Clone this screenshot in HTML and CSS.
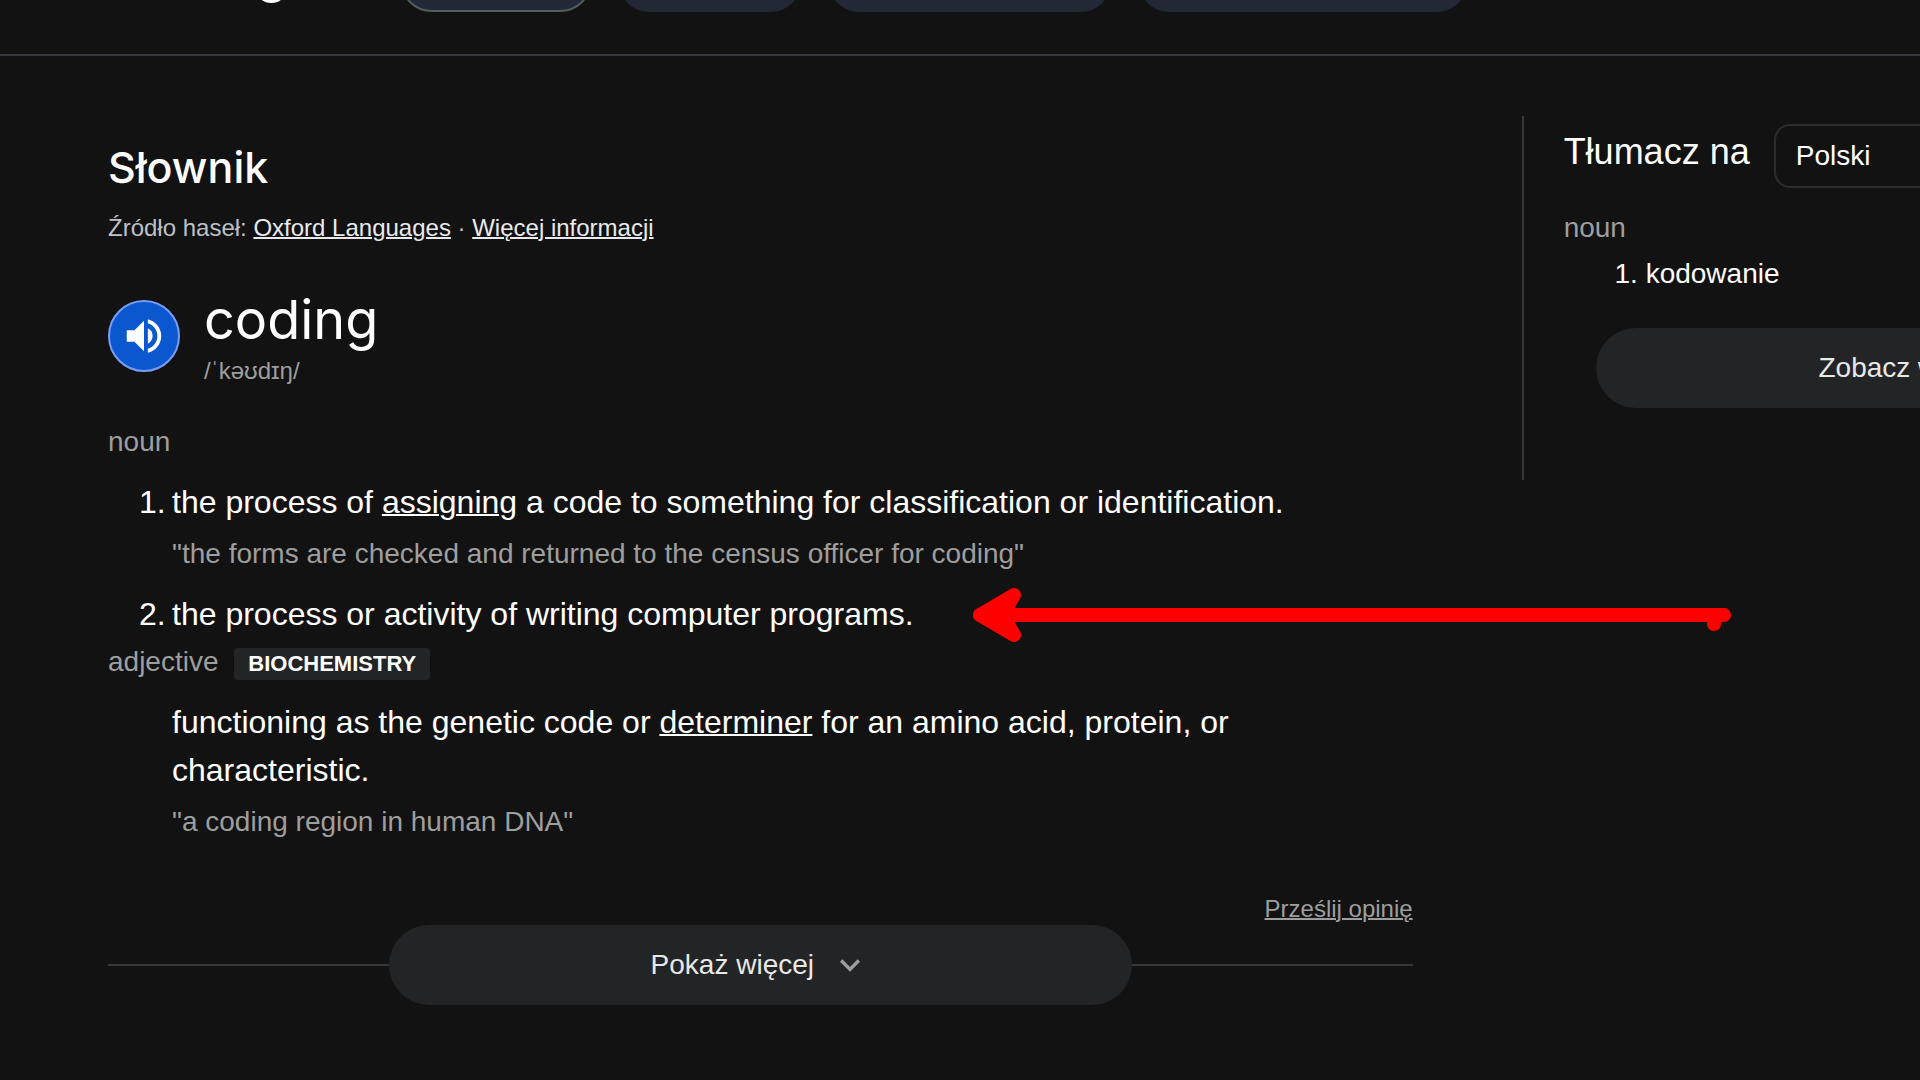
FILE: index.html
```html
<!DOCTYPE html>
<html lang="pl">

<head>
    <meta charset="UTF-8">
    <meta name="viewport" content="width=device-width, initial-scale=1.0">
    <title>coding</title>
    <link rel="stylesheet" href="styles.css">
</head>

<body>
    <header class="topbar">
        <div class="topbar-title">coding</div>
        <nav class="chips">
            <button class="chip chip-s active"></button>
            <button class="chip chip-s"></button>
            <button class="chip chip-m"></button>
            <button class="chip chip-l"></button>
        </nav>
    </header>

    <div class="container">
        <main class="dictionary">
            <h1>Słownik</h1>
            <p class="source">Źródło haseł: <a href="#">Oxford Languages</a> · <a href="#">Więcej informacji</a></p>

            <div class="word">
                <button class="speaker">
                    <svg viewBox="0 0 24 24" width="46" height="46">
                        <path fill="#fff" d="M3 9v6h4l5 5V4L7 9H3zm13.5 3A4.5 4.5 0 0 0 14 7.97v8.05c1.48-.73 2.5-2.25 2.5-4.02zM14 3.23v2.06c2.89.86 5 3.54 5 6.71s-2.11 5.85-5 6.71v2.06c4.01-.91 7-4.49 7-8.77s-2.99-7.86-7-8.77z"/>
                    </svg>
                </button>
                <div>
                    <h2>coding</h2>
                    <div class="phonetic">/ˈkəʊdɪŋ/</div>
                </div>
            </div>

            <div class="part">noun</div>
            <ol class="senses">
                <li>
                    <p>the process of <a href="#">assigning</a> a code to something for classification or identification.</p>
                    <p class="example">"the forms are checked and returned to the census officer for coding"</p>
                </li>
                <li>
                    <p>the process or activity of writing computer programs.</p>
                    <!-- arrow -->
                    <svg class="arrow" viewBox="0 0 760 56" width="760" height="56">
                        <g fill="none" stroke="#f00" stroke-width="14" stroke-linecap="round" stroke-linejoin="round">
                            <path d="M8 28H752M742 28V37"/>
                            <path fill="#f00" d="M42 8L8 28L42 48Q34 35 32 28Q34 21 42 8Z"/>
                        </g>
                    </svg>
                </li>
            </ol>

            <div class="part">adjective <span class="tag">BIOCHEMISTRY</span></div>
            <div class="senses">
                <p>functioning as the genetic code or <a href="#">determiner</a> for an amino acid, protein, or characteristic.</p>
                <p class="example">"a coding region in human DNA"</p>
            </div>

            <a class="feedback" href="#">Prześlij opinię</a>
            <div class="more-row">
                <button class="more">
                    Pokaż więcej
                    <svg viewBox="0 0 24 24" width="40" height="40">
                        <path fill="#9e9e9e" d="M7.4 8.6L12 13.2l4.6-4.6L18 10l-6 6-6-6z"/>
                    </svg>
                </button>
            </div>
        </main>

        <aside class="translate">
            <div class="translate-head">
                <label for="language">Tłumacz na</label>
                <select id="language">
                    <option>Polski</option>
                </select>
            </div>
            <div class="part">noun</div>
            <ol class="translations">
                <li>kodowanie</li>
            </ol>
            <button class="more">
                Zobacz więcej
                <svg viewBox="0 0 24 24" width="40" height="40">
                    <path fill="#9e9e9e" d="M7.4 8.6L12 13.2l4.6-4.6L18 10l-6 6-6-6z"/>
                </svg>
            </button>
        </aside>
    </div>
</body>

</html>
```
FILE: styles.css
```css
@counter-style senses {
    system: extends decimal;
    suffix: ".\2009";
}

* {
    box-sizing: border-box;
}

body {
    margin: 0;
    background-color: #121212;
    color: #fff;
    font-family: "Liberation Sans", Arial, sans-serif;
    font-size: 28px;
    line-height: 44px;
    overflow: hidden;
}

h1,
h2,
p,
ol {
    margin: 0;
    padding: 0;
    font-weight: normal;
}

a {
    color: inherit;
    text-decoration-thickness: 2px;
}

button,
select {
    font: inherit;
    cursor: pointer;
}

/* the bar is scrolled up, only its lower edge shows */
.topbar {
    display: flex;
    margin-top: -52px;
    padding: 0 0 42px 114px;
    border-bottom: 2px solid #37383b;
}

.topbar-title {
    width: 286px;
    font-family: Inter, Roboto, sans-serif;
    font-size: 54px;
    line-height: 48px;
}

.chips {
    display: flex;
    gap: 26px;
}

.chip {
    width: 184px;
    height: 64px;
    border: 2px solid #222835;
    border-radius: 32px;
    background-color: #222835;
}

.chip.active {
    width: 192px;
    border-color: #535d5e;
}

.chip-m {
    width: 284px;
}

.chip-l {
    width: 330px;
}

.container {
    display: grid;
    grid-template-columns: 72% 43%;
    column-gap: 109px;
    align-items: start;
    padding: 60px 0 0 108px;
}

.dictionary {
    padding-top: 23px;
}

h1 {
    font-family: Inter, Roboto, sans-serif;
    font-size: 43px;
    font-weight: 500;
    line-height: 56px;
}

.source {
    margin-top: 15px;
    color: #bdc1c6;
    font-size: 24px;
    line-height: 36px;
}

.source a {
    color: #e8eaed;
}

.word {
    display: flex;
    gap: 24px;
    margin-top: 42px;
}

.speaker {
    display: flex;
    align-items: center;
    justify-content: center;
    width: 72px;
    height: 72px;
    margin-top: 12px;
    padding: 0;
    border: 2px solid #7c9df5;
    border-radius: 50%;
    background-color: #0b57d0;
}

h2 {
    font-family: Inter, Roboto, sans-serif;
    font-size: 54px;
    line-height: 64px;
}

.phonetic {
    color: #9e9e9e;
    font-size: 24px;
    line-height: 38px;
}

.part {
    color: #9e9e9e;
}

.word + .part {
    margin-top: 30px;
}

.senses + .part {
    margin-top: 2px;
}

.tag {
    display: inline-block;
    margin-left: 8px;
    padding: 0 14px;
    border-radius: 4px;
    background-color: #232426;
    color: #fff;
    font-size: 22px;
    font-weight: bold;
    line-height: 32px;
}

.senses {
    margin-top: 14px;
    padding-left: 64px;
    font-size: 32px;
    line-height: 48px;
    list-style: senses;
}

.senses li {
    position: relative;
}

.senses li + li {
    margin-top: 14px;
}

.example {
    margin-top: 6px;
    color: #9e9e9e;
    font-size: 28px;
    line-height: 44px;
}

.arrow {
    position: absolute;
    top: -3px;
    left: 800px;
}

.feedback {
    display: block;
    width: fit-content;
    margin: 49px 0 0 auto;
    color: #9e9e9e;
    font-size: 24px;
    line-height: 32px;
}

.more {
    display: flex;
    align-items: center;
    justify-content: center;
    gap: 16px;
    height: 80px;
    border: none;
    border-radius: 40px;
    background-color: #232426;
    color: #e8e8e8;
}

.more-row {
    display: flex;
    align-items: center;
}

.more-row::before,
.more-row::after {
    content: "";
    flex: 1;
    height: 2px;
    background-color: #37383b;
}

.more-row .more {
    width: 57%;
}

.translate {
    padding: 8px 26px 72px 40px;
    border-left: 2px solid #37383b;
}

.translate-head {
    display: flex;
    gap: 24px;
    margin-bottom: 18px;
}

.translate-head label {
    font-size: 36px;
    line-height: 56px;
}

.translate-head select {
    flex: 1;
    height: 64px;
    padding: 0 20px;
    border: 2px solid #2c2d2f;
    border-radius: 16px;
    background-color: #121212;
    color: #fff;
    appearance: none;
}

.translations {
    margin-top: 2px;
    padding-left: 82px;
}

.translate .more {
    width: calc(100% - 32px);
    margin: 32px 0 0 32px;
}
```
